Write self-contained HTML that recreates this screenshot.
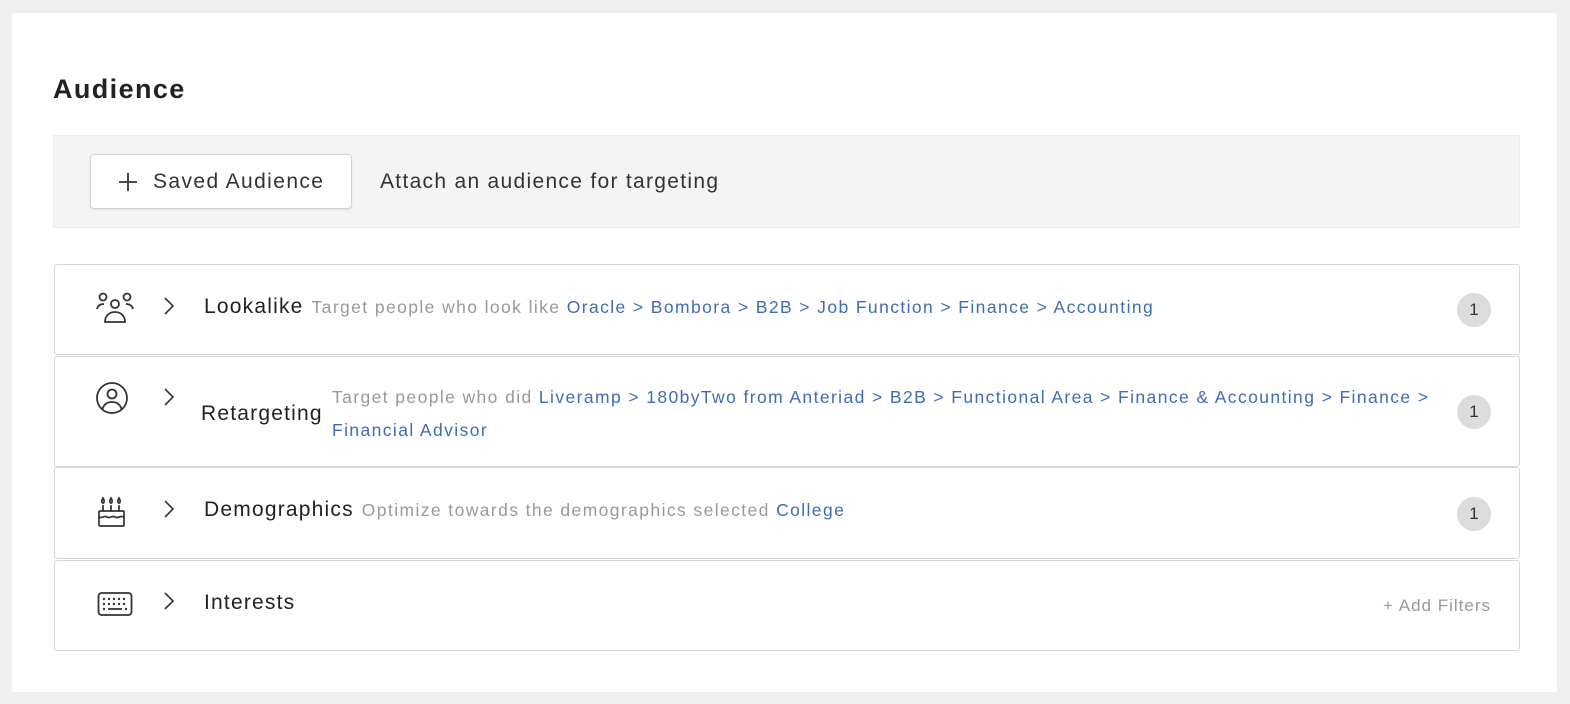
<!DOCTYPE html>
<html><head><meta charset="utf-8"><style>
*{box-sizing:border-box;margin:0;padding:0}
body{width:1570px;height:704px;background:#efefef;font-family:"Liberation Sans",sans-serif;position:relative;overflow:hidden}
.card{position:absolute;left:12px;top:13px;width:1545px;height:679px;background:#fff;border-radius:3px}
h1{position:absolute;left:53px;top:74px;font-size:27px;font-weight:bold;color:#222;letter-spacing:1.4px}
.band{position:absolute;left:53px;top:135px;width:1467px;height:93px;background:#f4f4f4;border:1px solid #ececec}
.btn{position:absolute;left:90px;top:154px;width:262px;height:55px;background:#fff;border:1px solid #d3d3d3;border-radius:4px;box-shadow:0 1px 2px rgba(0,0,0,.08);font-size:21px;color:#333;line-height:53px;padding-left:62px;letter-spacing:1.4px}
.btn svg{position:absolute;left:27px;top:17px}
.attach{position:absolute;left:380px;top:170px;font-size:21px;color:#333;letter-spacing:1.3px}
.row{position:absolute;left:54px;width:1466px;background:#fff;border:1px solid #d6d6d6;border-radius:3px}
.row .ic{position:absolute;left:40px}
.row .chev{position:absolute;left:107px}
.t{position:absolute;font-size:21px;color:#222;letter-spacing:1.2px}
.line{position:absolute;left:149px;top:26px;white-space:nowrap}
.line .tt{font-size:21px;color:#222;letter-spacing:1.2px;margin-right:8px}
.d{font-size:17.5px;color:#999;line-height:33px;letter-spacing:1.4px}
.d b{font-weight:normal;color:#3f6db3}
.badge{position:absolute;left:1402px;width:34px;height:34px;border-radius:50%;background:#dcdcdc;color:#333;font-size:17px;text-align:center;line-height:34px}
.add{position:absolute;right:28px;font-size:17px;color:#999;letter-spacing:1px}
</style></head><body>
<div class="card"></div>
<h1>Audience</h1>
<div class="band"></div>
<div class="btn"><svg width="20" height="20" viewBox="0 0 20 20"><path d="M10 1v18M1 10h18" stroke="#333" stroke-width="1.8"/></svg>Saved Audience</div>
<div class="attach">Attach an audience for targeting</div>

<div class="row" style="top:264px;height:91px">
<svg class="ic" style="top:26px" width="40" height="36" viewBox="0 0 40 36" fill="none" stroke="#333" stroke-width="1.8"><circle cx="8" cy="6" r="3.5"/><circle cx="32" cy="6" r="3.5"/><circle cx="20" cy="13" r="4"/><path d="M2 18c1-4 4-5 7-5M38 18c-1-4-4-5-7-5"/><path d="M10 31c0-6 4-10 10-10s10 4 10 10z"/></svg>
<svg class="chev" style="top:31px" width="14" height="20" viewBox="0 0 14 20"><path d="M3 2l8 8-8 8" stroke="#333" stroke-width="1.6" fill="none"/></svg>
<div class="line"><span class="tt">Lookalike</span><span class="d">Target people who look like <b>Oracle &gt; Bombora &gt; B2B &gt; Job Function &gt; Finance &gt; Accounting</b></span></div>
<div class="badge" style="top:28px">1</div>
</div>

<div class="row" style="top:356px;height:111px">
<svg class="ic" style="top:24px" width="34" height="34" viewBox="0 0 34 34" fill="none" stroke="#333" stroke-width="1.8"><circle cx="17" cy="17" r="15"/><circle cx="17" cy="13" r="4.5"/><path d="M7.5 28c1.5-5 5-7 9.5-7s8 2 9.5 7"/></svg>
<svg class="chev" style="top:30px" width="14" height="20" viewBox="0 0 14 20"><path d="M3 2l8 8-8 8" stroke="#333" stroke-width="1.6" fill="none"/></svg>
<div class="t" style="left:146px;top:45px">Retargeting</div>
<div class="d" style="position:absolute;left:277px;top:24px;width:1100px">Target people who did <b>Liveramp &gt; 180byTwo from Anteriad &gt; B2B &gt; Functional Area &gt; Finance &amp; Accounting &gt; Finance &gt; Financial Advisor</b></div>
<div class="badge" style="top:38px">1</div>
</div>

<div class="row" style="top:467px;height:92px">
<svg class="ic" style="top:28px;left:42px" width="30" height="32" viewBox="0 0 30 32" fill="none" stroke="#333" stroke-width="1.7"><path d="M6 2c-2 3-1 5 0 5s2-2 0-5zM14 2c-2 3-1 5 0 5s2-2 0-5zM22 2c-2 3-1 5 0 5s2-2 0-5z"/><path d="M6 9v6M14 9v6M22 9v6"/><rect x="2" y="15" width="25" height="15" rx="1"/><path d="M2 21c3 2 5-2 8 0s5-2 8 0 5-2 9 0"/></svg>
<svg class="chev" style="top:31px" width="14" height="20" viewBox="0 0 14 20"><path d="M3 2l8 8-8 8" stroke="#333" stroke-width="1.6" fill="none"/></svg>
<div class="line"><span class="tt">Demographics</span><span class="d">Optimize towards the demographics selected <b>College</b></span></div>
<div class="badge" style="top:29px">1</div>
</div>

<div class="row" style="top:560px;height:91px">
<svg class="ic" style="top:30px;left:42px" width="36" height="26" viewBox="0 0 36 26" fill="none" stroke="#333" stroke-width="1.8"><rect x="1.5" y="2" width="33" height="22" rx="3"/><g fill="#333" stroke="none"><circle cx="7" cy="8" r="1.2"/><circle cx="12" cy="8" r="1.2"/><circle cx="17" cy="8" r="1.2"/><circle cx="22" cy="8" r="1.2"/><circle cx="27" cy="8" r="1.2"/><circle cx="7" cy="13" r="1.2"/><circle cx="12" cy="13" r="1.2"/><circle cx="17" cy="13" r="1.2"/><circle cx="22" cy="13" r="1.2"/><circle cx="27" cy="13" r="1.2"/><circle cx="7" cy="18" r="1.2"/><circle cx="29" cy="18" r="1.2"/></g><path d="M11 18h14"/></svg>
<svg class="chev" style="top:30px" width="14" height="20" viewBox="0 0 14 20"><path d="M3 2l8 8-8 8" stroke="#333" stroke-width="1.6" fill="none"/></svg>
<div class="t" style="left:149px;top:30px">Interests</div>
<div class="add" style="top:35px">+ Add Filters</div>
</div>
</body></html>
